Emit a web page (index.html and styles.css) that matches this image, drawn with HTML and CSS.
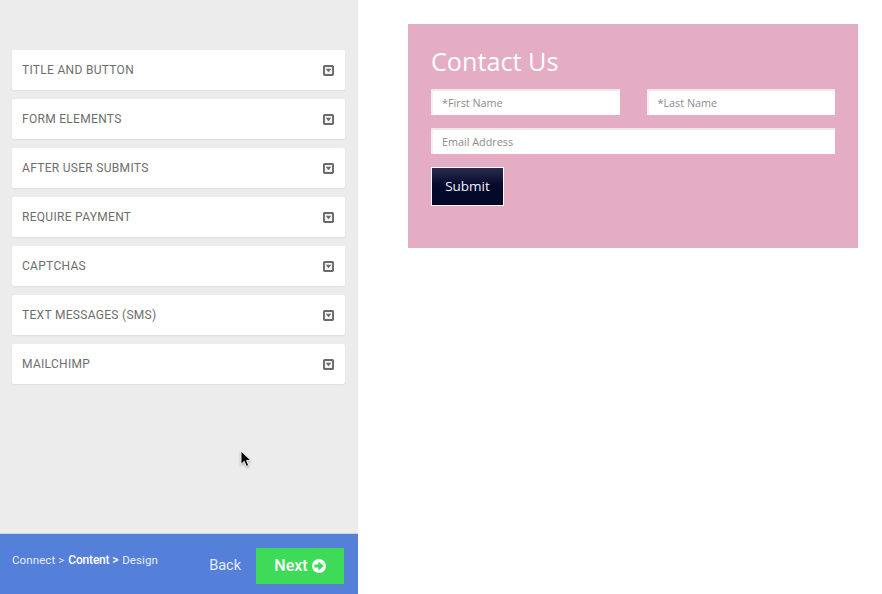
FILE: index.html
```html
<!DOCTYPE html>
<html lang="en">
<head>
  <meta charset="UTF-8" />
  <title>Form Builder</title>
  <link rel="stylesheet" href="styles.css">
</head>
<body>
  <div class="app">
    <div class="sidebar">
      <div class="sections">
        <div class="section">TITLE AND BUTTON<svg class="caret" viewBox="0 0 12 12"><rect x="1" y="1" width="10" height="10" rx="1.5"/><path d="M3 4.2h6L6 8z"/></svg></div>
        <div class="section">FORM ELEMENTS<svg class="caret" viewBox="0 0 12 12"><rect x="1" y="1" width="10" height="10" rx="1.5"/><path d="M3 4.2h6L6 8z"/></svg></div>
        <div class="section">AFTER USER SUBMITS<svg class="caret" viewBox="0 0 12 12"><rect x="1" y="1" width="10" height="10" rx="1.5"/><path d="M3 4.2h6L6 8z"/></svg></div>
        <div class="section">REQUIRE PAYMENT<svg class="caret" viewBox="0 0 12 12"><rect x="1" y="1" width="10" height="10" rx="1.5"/><path d="M3 4.2h6L6 8z"/></svg></div>
        <div class="section">CAPTCHAS<svg class="caret" viewBox="0 0 12 12"><rect x="1" y="1" width="10" height="10" rx="1.5"/><path d="M3 4.2h6L6 8z"/></svg></div>
        <div class="section">TEXT MESSAGES (SMS)<svg class="caret" viewBox="0 0 12 12"><rect x="1" y="1" width="10" height="10" rx="1.5"/><path d="M3 4.2h6L6 8z"/></svg></div>
        <div class="section">MAILCHIMP<svg class="caret" viewBox="0 0 12 12"><rect x="1" y="1" width="10" height="10" rx="1.5"/><path d="M3 4.2h6L6 8z"/></svg></div>
      </div>
      <div class="footer">
        <div class="steps">Connect &gt; <b>Content &gt;</b> Design</div>
        <div class="actions">
          <span class="back">Back</span>
          <button class="next">Next
            <svg class="next-icon" viewBox="0 0 14 14"><circle cx="7" cy="7" r="7" fill="#fff"/><path d="M2.4 5.5h4V2.4L11.8 7l-5.4 4.6V8.5h-4z" fill="#3ddb58"/></svg>
          </button>
        </div>
      </div>
    </div>

    <div class="preview">
      <form class="contact">
        <h1>Contact Us</h1>
        <div class="row">
          <input type="text" placeholder="*First Name" />
          <input type="text" placeholder="*Last Name" />
        </div>
        <div class="row">
          <input type="text" placeholder="Email Address" />
        </div>
        <button type="button" class="submit">Submit</button>
      </form>
    </div>
  </div>

  <svg class="cursor" viewBox="0 0 12 20"><path d="M1 1v15l3.6-3.4 2.4 5.6 2.6-1.1-2.4-5.4H12z" fill="#000" stroke="#fff" stroke-width="1"/></svg>
</body>
</html>
```

FILE: styles.css
```css
* {
  box-sizing: border-box;
}

body {
  margin: 0;
  background-color: #ffffff;
  font-family: 'Roboto', sans-serif;
  overflow: hidden;
}

.app {
  display: flex;
  height: 594px;
}

.sidebar {
  width: 358px;
  background-color: #ececec;
  display: flex;
  flex-direction: column;
  justify-content: space-between;
}

.sections {
  display: flex;
  flex-direction: column;
  gap: 9px;
  padding: 50px 13px 0 12px;
}

.section {
  height: 40px;
  background-color: #ffffff;
  border-radius: 2px;
  box-shadow: 0 1px 2px rgba(0,0,0,0.06);
  padding: 0 11px 0 10px;
  display: flex;
  justify-content: space-between;
  align-items: center;
  font-size: 12px;
  letter-spacing: 0.3px;
  color: #6e6e6e;
}

.caret {
  width: 11px;
  height: 11px;
  margin-top: 1px;
}

.caret rect {
  fill: #f4f4f4;
  stroke: #6a6a6a;
  stroke-width: 2.2;
}

.caret path {
  fill: #6a6a6a;
}

.footer {
  height: 61px;
  background-color: #5580d9;
  border-top: 1px solid #d0d4dc;
  display: flex;
  justify-content: space-between;
  align-items: center;
  padding: 0 14px 0 12px;
  color: #ffffff;
}

.steps {
  font-size: 11.5px;
  color: #e6ecfa;
  letter-spacing: 0.1px;
  margin-bottom: 8px;
}

.steps b {
  font-size: 12px;
  font-weight: 500;
  color: #ffffff;
  letter-spacing: -0.2px;
  margin: 0 1px;
}

.actions {
  display: flex;
  align-items: center;
  gap: 15px;
  margin-top: 3px;
}

.back {
  font-size: 14.5px;
  color: #e6ecfa;
}

.next {
  width: 88px;
  height: 36px;
  background-color: #3ddb58;
  border: none;
  color: #ffffff;
  font-family: 'Roboto', sans-serif;
  font-size: 16px;
  font-weight: 500;
  display: flex;
  justify-content: center;
  align-items: center;
  gap: 4px;
}

.next-icon {
  width: 14px;
  height: 14px;
}

.preview {
  flex: 1;
  padding: 24px 0 0 50px;
}

.contact {
  width: 450px;
  height: 224px;
  background-color: #e4adc4;
  padding: 20px 23px 0;
  font-family: 'Open Sans', sans-serif;
}

.contact h1 {
  margin: 0 0 11px;
  font-size: 25.2px;
  font-weight: 400;
  line-height: 34px;
  color: #ffffff;
}

.row {
  display: flex;
  gap: 27px;
  margin-bottom: 13px;
}

.row input {
  flex: 1;
  min-width: 0;
  height: 26px;
  border: none;
  box-shadow: inset 0 2px 0 #efe6ea, inset 2px 0 1px #f6eff2;
  background-color: #ffffff;
  padding: 0 11px;
  font-family: 'Open Sans', sans-serif;
  font-size: 10.8px;
}

.row input::placeholder {
  color: #8c8c8c;
  opacity: 1;
}

.submit {
  width: 73px;
  height: 39px;
  border: 1px solid #ffffff;
  background: linear-gradient(#2a2c4e, #060a2c 45%, #030828);
  color: #f2f2f8;
  font-family: 'Open Sans', sans-serif;
  font-size: 13.5px;
  padding: 0 0 2px;
}

/* mouse pointer caught in the screenshot */
.cursor {
  position: absolute;
  left: 240px;
  top: 450px;
  width: 11px;
  height: 18px;
  filter: drop-shadow(0 1px 1px rgba(0,0,0,0.3));
}
```
